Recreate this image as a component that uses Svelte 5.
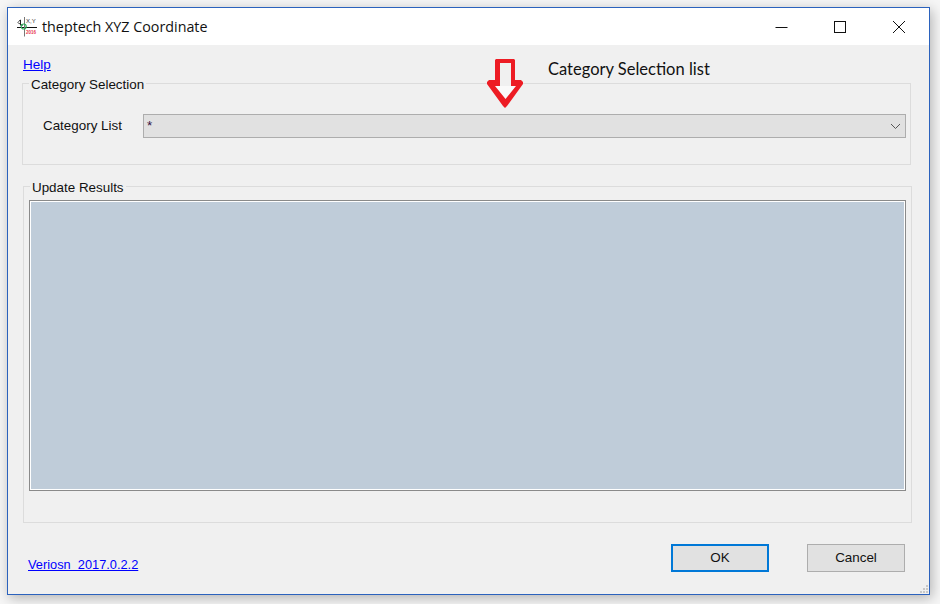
<script>
  const title = 'theptech XYZ Coordinate';
</script>

<div class="desktop">
  <div class="window">
    <header class="titlebar">
      <svg class="appicon" width="20" height="20" viewBox="0 0 20 20" aria-hidden="true">
        <path d="M0 10.500H20" stroke="#111" stroke-width="1"/>
        <path d="M7.500 0V19.500" stroke="#777" stroke-width="1"/>
        <path d="M1.500 4.500l2-1.500v5.500" stroke="#222" fill="none" stroke-width="1"/>
        <path d="M0.500 5.500l5.500 3" stroke="#222" stroke-width="0.800"/>
        <circle cx="6.700" cy="9.500" r="2.500" fill="none" stroke="#2fae5a" stroke-width="1.200"/>
        <text x="9" y="6" class="ic-xy">X,Y</text>
        <text x="9" y="16.500" class="ic-red">2016</text>
      </svg>
      <span class="title">{title}</span>
      <div class="controls">
        <svg width="14" height="14" viewBox="0 0 14 14" aria-hidden="true"><path d="M1.500 7.500H13.500" stroke="#111" stroke-width="1"/></svg>
        <svg width="14" height="14" viewBox="0 0 14 14" aria-hidden="true"><rect x="1.500" y="1.500" width="11" height="11" fill="none" stroke="#111" stroke-width="1"/></svg>
        <svg width="14" height="14" viewBox="0 0 14 14" aria-hidden="true"><path d="M1 1L13 13M13 1L1 13" stroke="#111" stroke-width="1"/></svg>
      </div>
    </header>

    <main class="client">
      <div class="help-row">
        <a class="link" href="#help">Help</a>
      </div>

      <section class="group g1">
        <span class="legend l1">Category Selection</span>
        <div class="field">
          <span class="field-label">Category List</span>
          <div class="combo">
            <span class="star">*</span>
            <svg width="11" height="7" viewBox="0 0 11 7" aria-hidden="true"><path d="M1 1l4.500 4.500L10 1" fill="none" stroke="#555" stroke-width="1"/></svg>
          </div>
        </div>
      </section>

      <section class="group g2">
        <span class="legend l2">Update Results</span>
        <div class="results"></div>
      </section>

      <footer class="footer">
        <a class="link version" href="#version">Veriosn&nbsp; 2017.0.2.2</a>
        <div class="buttons">
          <button class="btn default">OK</button>
          <button class="btn">Cancel</button>
        </div>
      </footer>

      <span class="note">Category Selection list</span>
      <svg class="arrow" width="38" height="50" viewBox="0 0 38 50" aria-hidden="true">
        <path d="M9 27H14V5H25V27H30L19.500 41Z" fill="#f0f0f0"/>
        <path d="M9 28H30L19.500 41Z" fill="#fafafa"/>
        <path fill-rule="evenodd" fill="#ed1c24" d="M10 1H28L29 2V22H35L37 24V26L21 48L19 50L17 48L1 26V24L3 22H9V2ZM14 5V28H9L19.500 41L30 28H25V5Z"/>
      </svg>

      <svg class="grip" width="10" height="10" viewBox="0 0 10 10" aria-hidden="true">
        <path d="M7 1h2v2H7zM7 4h2v2H7zM4 4h2v2H4zM7 7h2v2H7zM4 7h2v2H4zM1 7h2v2H1z" fill="#c8c8c8"/>
      </svg>
    </main>
  </div>
</div>

<style>
  :global(body) {
    margin: 0;
    background: #f6f6f6;
  }
  .desktop {
    width: 940px;
    height: 604px;
    padding: 7px 10px 9px 7px;
    box-sizing: border-box;
    overflow: hidden;
    font-family: "Liberation Sans", Arial, sans-serif;
    font-size: 13.400px;
    color: #111;
  }
  .window {
    width: 923px;
    height: 588px;
    box-sizing: border-box;
    border: 1px solid #2b62bd;
    background: #f0f0f0;
    box-shadow: 2px 3px 12px rgba(0, 0, 0, 0.28);
    display: flex;
    flex-direction: column;
  }
  .titlebar {
    height: 37px;
    flex: none;
    background: #fff;
    display: flex;
    align-items: center;
    padding-left: 9px;
    box-sizing: border-box;
  }
  .appicon { margin-right: 5px; margin-top: 1px; }
  .ic-xy { font: 6px "Liberation Sans", sans-serif; fill: #333; }
  .ic-red { font: bold 4.500px "Liberation Sans", sans-serif; fill: #e8384f; }
  .title {
    font-family: "Open Sans", sans-serif;
    font-size: 14.300px;
    color: #111;
  }
  .controls {
    margin-left: auto;
    display: flex;
    gap: 45px;
    padding-right: 23px;
    align-items: center;
  }
  .client {
    position: relative;
    flex: 1;
    padding: 0 17px 0 14px;
    display: flex;
    flex-direction: column;
    min-height: 0;
    background: #f0f0f0;
  }
  .help-row {
    height: 38px;
    padding: 12px 0 0 1px;
    box-sizing: border-box;
    line-height: 15px;
  }
  .link {
    color: #0000ff;
    text-decoration: underline;
    font-size: 13.500px;
  }
  .group {
    position: relative;
    border: 1px solid #dcdcdc;
    box-sizing: border-box;
  }
  .g1 {
    width: 889px;
    height: 82px;
    padding: 30px 4px 0 20px;
  }
  .g2 {
    width: 889px;
    height: 337px;
    margin: 21px 0 0 1px;
    padding: 13px 5px 0 5px;
  }
  .legend {
    position: absolute;
    top: -7px;
    background: #f0f0f0;
    padding: 0 2px 0 2px;
    line-height: 16px;
    white-space: nowrap;
  }
  .l1 { left: 6px; }
  .l2 { left: 6px; }
  .field {
    display: flex;
    align-items: center;
  }
  .field-label { width: 100px; position: relative; top: -1px; }
  .combo {
    width: 763px;
    height: 24px;
    box-sizing: border-box;
    border: 1px solid #adadad;
    background: #e1e1e1;
    display: flex;
    align-items: center;
    justify-content: space-between;
    padding: 0 4px 0 3px;
  }
  .star { color: #301040; position: relative; top: -1px; }
  .results {
    width: 877px;
    height: 291px;
    box-sizing: border-box;
    border: 1px solid #8a8a8a;
    outline: 1px solid #fff;
    outline-offset: -2px;
    background: #bfccd9;
  }
  .footer {
    flex: 1;
    display: flex;
    justify-content: space-between;
    padding: 21px 7px 0 6px;
  }
  .version {
    font-size: 12.800px;
    margin-top: 13px;
    line-height: 15px;
    height: 15px;
  }
  .buttons {
    display: flex;
    gap: 38px;
  }
  .btn {
    width: 98px;
    height: 28px;
    box-sizing: border-box;
    border: 1px solid #adadad;
    background: #e1e1e1;
    font: 13.400px "Liberation Sans", Arial, sans-serif;
    color: #111;
    padding: 0 0 2px 0;
  }
  .btn.default {
    border: 2px solid #0078d7;
  }
  .note {
    position: absolute;
    left: 540px;
    top: 14px;
    font-family: Lato, sans-serif;
    font-size: 16.500px;
    color: #111;
    white-space: nowrap;
  }
  .arrow {
    position: absolute;
    left: 478px;
    top: 13px;
  }
  .grip {
    position: absolute;
    right: 0;
    bottom: 0;
  }
</style>
